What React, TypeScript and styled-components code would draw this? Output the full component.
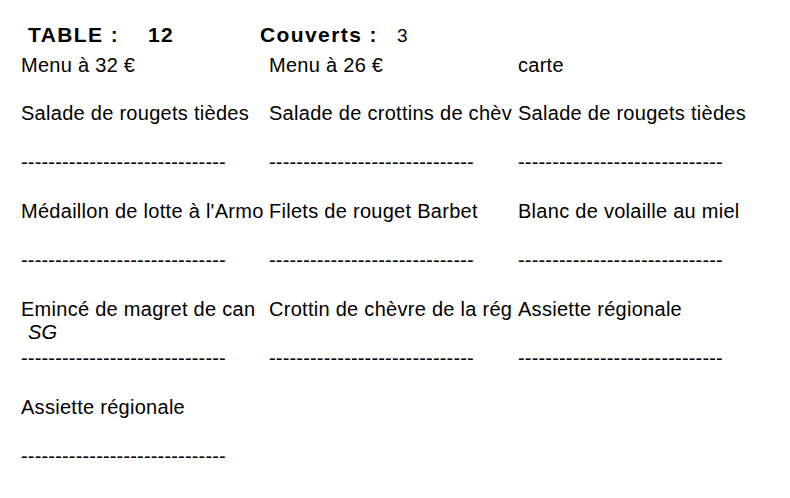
import React from 'react';
import styled, { createGlobalStyle } from 'styled-components';

const GlobalStyle = createGlobalStyle`
  html, body {
    margin: 0;
    padding: 0;
    background: #ffffff;
  }
  body {
    font-family: 'Liberation Sans', Arial, sans-serif;
    color: #000000;
  }
`;

const Page = styled.div`
  width: 790px;
  height: 498px;
  padding: 22px 0 0 21px;
  box-sizing: border-box;
  overflow: hidden;
`;

const Header = styled.div`
  display: flex;
  align-items: baseline;
  padding-left: 7px;
  height: 32px;
`;

const HeaderLabel = styled.span<{ $width: number }>`
  width: ${p => p.$width}px;
  font-size: 21px;
  font-weight: bold;
  letter-spacing: 1.4px;
  line-height: 25px;
  white-space: pre;
`;

const HeaderValue = styled.span<{ $width?: number; $bold?: boolean }>`
  width: ${p => (p.$width ? `${p.$width}px` : 'auto')};
  font-size: ${p => (p.$bold ? '21px' : '19px')};
  font-weight: ${p => (p.$bold ? 'bold' : 'normal')};
  letter-spacing: ${p => (p.$bold ? '1.4px' : '0')};
  line-height: 25px;
`;

const Columns = styled.div`
  display: grid;
  grid-template-columns: 248px 249px 249px;
`;

const Column = styled.div`
  display: flex;
  flex-direction: column;
`;

const Cell = styled.div<{ $height: number; $dashes?: boolean }>`
  height: ${p => p.$height}px;
  font-size: 20px;
  letter-spacing: ${p => (p.$dashes ? '0.17px' : '0.28px')};
  line-height: 23px;
  white-space: nowrap;
`;

const Note = styled.div`
  font-style: italic;
  padding-left: 7px;
`;

type Dish = { name: string; note?: string };

const DASHES = '------------------------------';

const menus: { title: string; dishes: Dish[] }[] = [
  {
    title: 'Menu à 32 €',
    dishes: [
      { name: 'Salade de rougets tièdes' },
      { name: "Médaillon de lotte à l'Armo" },
      { name: 'Emincé de magret de can', note: 'SG' },
      { name: 'Assiette régionale' },
    ],
  },
  {
    title: 'Menu à 26 €',
    dishes: [
      { name: 'Salade de crottins de chèv' },
      { name: 'Filets de rouget Barbet' },
      { name: 'Crottin de chèvre de la rég' },
    ],
  },
  {
    title: 'carte',
    dishes: [
      { name: 'Salade de rougets tièdes' },
      { name: 'Blanc de volaille au miel' },
      { name: 'Assiette régionale' },
    ],
  },
];

const App = () => (
  <>
    <GlobalStyle />
    <Page>
      <Header>
        <HeaderLabel $width={120}>TABLE :</HeaderLabel>
        <HeaderValue $width={112} $bold>
          12
        </HeaderValue>
        <HeaderLabel $width={137}>Couverts :</HeaderLabel>
        <HeaderValue>3</HeaderValue>
      </Header>
      <Columns>
        {menus.map(menu => (
          <Column key={menu.title}>
            <Cell $height={48}>{menu.title}</Cell>
            {menu.dishes.map(dish => (
              <React.Fragment key={dish.name}>
                <Cell $height={49}>
                  {dish.name}
                  {dish.note && <Note>{dish.note}</Note>}
                </Cell>
                <Cell $height={49} $dashes>
                  {DASHES}
                </Cell>
              </React.Fragment>
            ))}
          </Column>
        ))}
      </Columns>
    </Page>
  </>
);

export default App;
